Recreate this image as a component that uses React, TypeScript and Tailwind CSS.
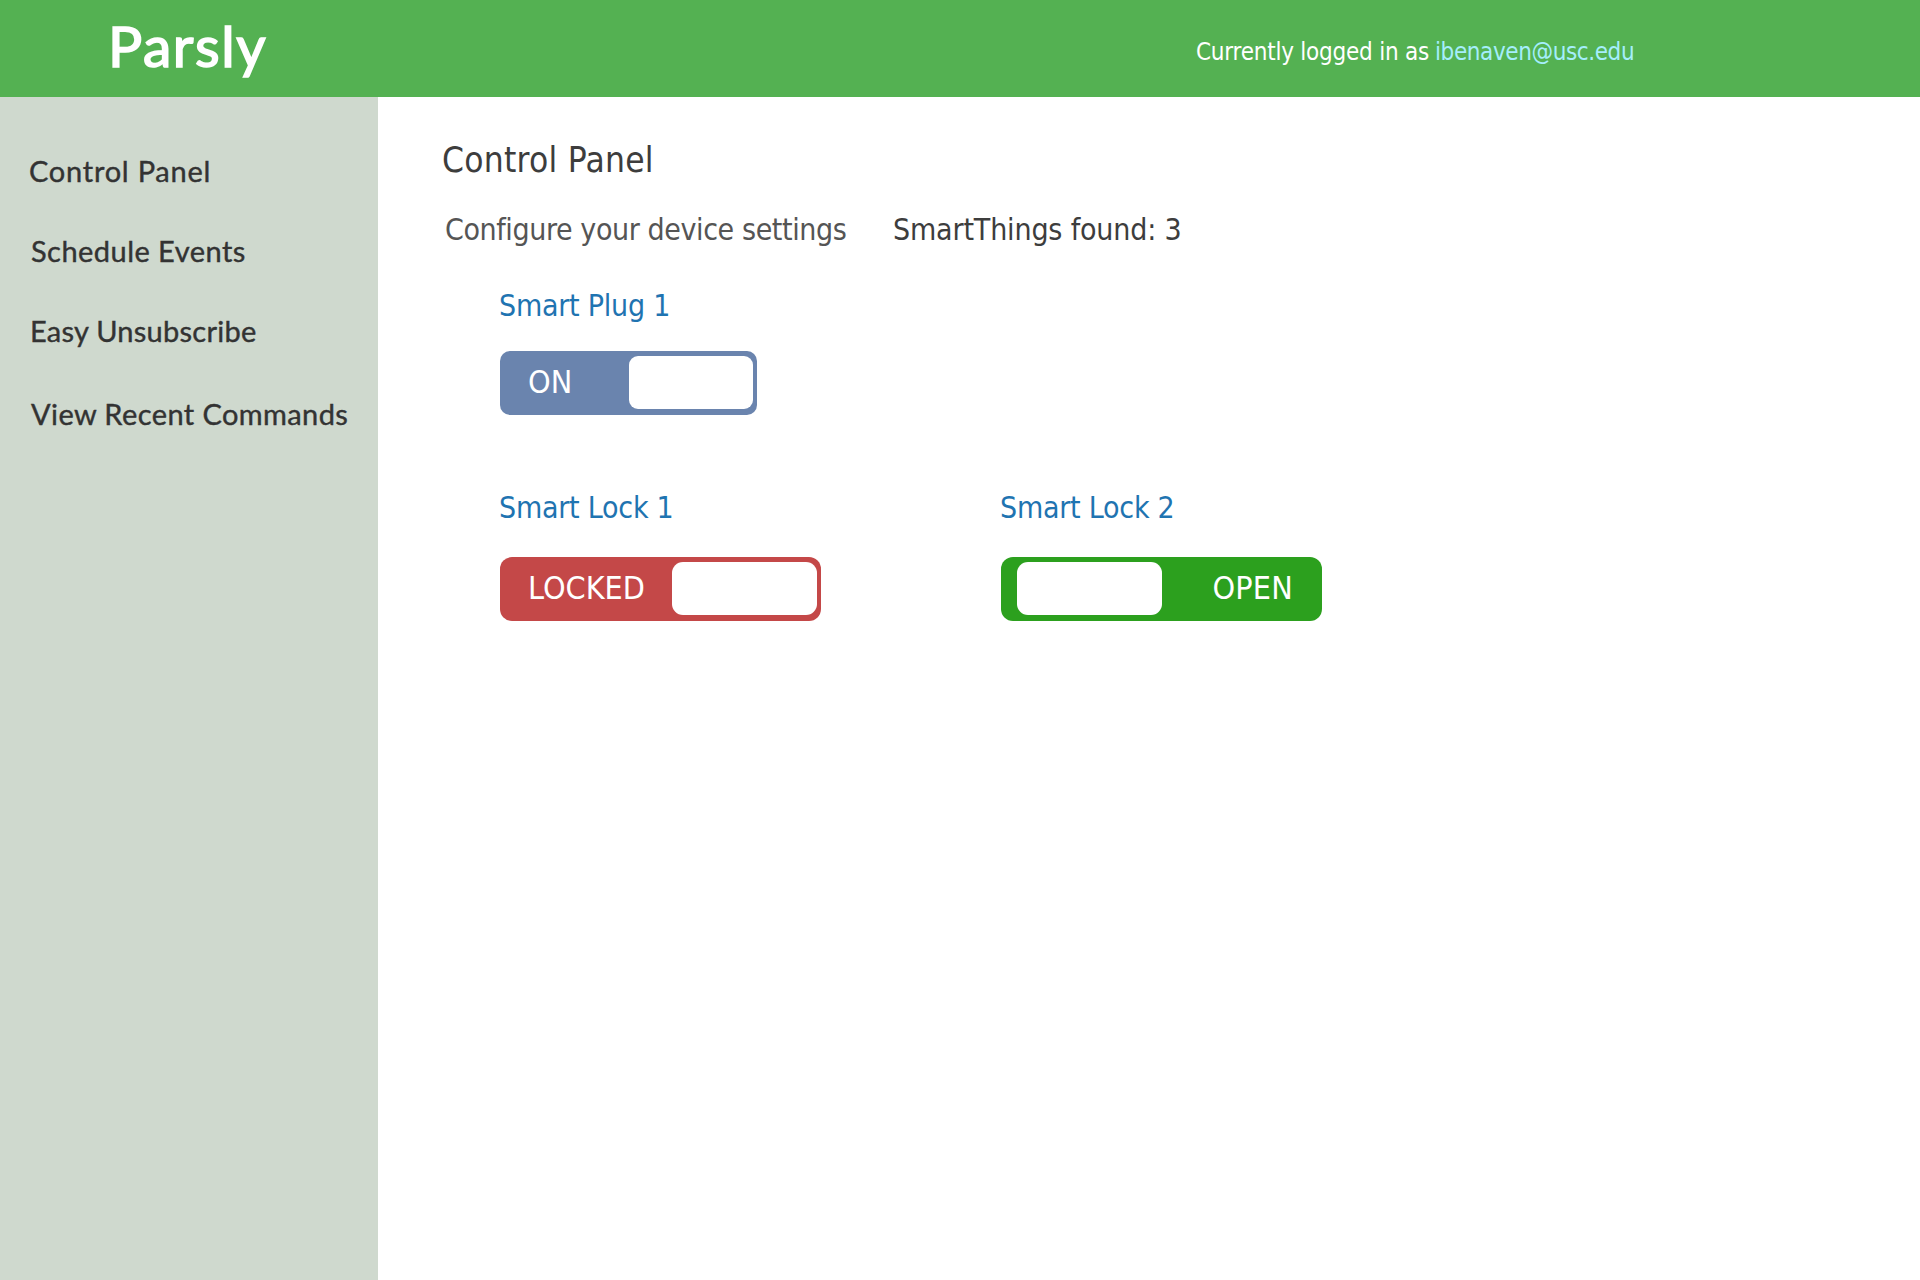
const NAV = [
  { label: 'Control Panel', className: 'ml-[29px] tracking-[0.76px]' },
  { label: 'Schedule Events', className: 'ml-[31px] mt-[45px] tracking-[0.46px]' },
  { label: 'Easy Unsubscribe', className: 'ml-[30px] mt-[45px] tracking-[0.25px]' },
  { label: 'View Recent Commands', className: 'ml-[31px] mt-12 tracking-[0.4px]' },
];

function Header() {
  return (
    <header className="flex h-[97px] items-start bg-[#54b152] text-white">
      <h1 className="mt-[11px] ml-[108px] w-[1088px] font-['Lato',sans-serif] text-[57px] leading-[69px] tracking-[1.6px] [-webkit-text-stroke:1.6px_white]">
        Parsly
      </h1>
      <p className="mt-[38px] flex text-2xl leading-7 whitespace-nowrap">
        <span className="w-[239px] tracking-[-0.23px]">Currently logged in as</span>
        <a className="tracking-[-0.4px] text-[#a5eefb]">ibenaven@usc.edu</a>
      </p>
    </header>
  );
}

function Sidebar() {
  return (
    <nav className="flex w-[378px] shrink-0 flex-col bg-[#cfd9ce] pt-14 font-['Lato',sans-serif] text-[29px] leading-[35px] whitespace-nowrap text-[#333333] [-webkit-text-stroke:0.4px_#333333]">
      {NAV.map((item) => (
        <a key={item.label} className={item.className}>
          {item.label}
        </a>
      ))}
    </nav>
  );
}

function DeviceName({ children }: { children: string }) {
  return (
    <h3 className="-ml-px text-[30px] leading-[35px] tracking-[-0.24px] whitespace-nowrap text-[#1f74b1]">{children}</h3>
  );
}

export default function App() {
  return (
    <div className="flex h-[1280px] w-[1920px] flex-col overflow-hidden bg-white font-['DejaVu_Sans_Condensed','DejaVu_Sans',sans-serif]">
      <Header />
      <div className="flex flex-1">
        <Sidebar />
        <main className="flex-1 pt-[43px] pl-16 text-[#3d3d3d]">
          <h2 className="text-[35px] leading-10 tracking-[0.25px]">Control Panel</h2>
          <div className="mt-8 ml-[3px] flex text-[30px] leading-[35px] whitespace-nowrap">
            <p className="w-[448px] tracking-[-0.4px] text-[#555555]">Configure your device settings</p>
            <p className="tracking-[-0.16px]">SmartThings found: 3</p>
          </div>

          <div className="mt-[41px] ml-[58px] grid grid-cols-[501px_321px] gap-y-[75px] text-[32px]">
            <section className="col-span-2">
              <DeviceName>Smart Plug 1</DeviceName>
              <div className="mt-7 flex h-16 w-[257px] items-center justify-between rounded-[10px] bg-[#6a84ae] pr-1 pl-[28px] leading-9 text-white">
                <span className="mb-0.5">ON</span>
                <span className="mb-0.5 h-[53px] w-[124px] rounded-[9px] bg-white" />
              </div>
            </section>

            <section>
              <DeviceName>Smart Lock 1</DeviceName>
              <div className="mt-8 flex h-16 w-[321px] items-center justify-between rounded-xl bg-[#c44848] pr-1 pl-[28px] leading-9 text-white">
                <span className="mb-0.5">LOCKED</span>
                <span className="mb-0.5 h-[53px] w-[145px] rounded-[11px] bg-white" />
              </div>
            </section>

            <section>
              <DeviceName>Smart Lock 2</DeviceName>
              <div className="mt-8 flex h-16 w-[321px] items-center justify-between rounded-xl bg-[#2ca01e] pr-[29px] pl-4 leading-9 text-white">
                <span className="mb-0.5 h-[53px] w-[145px] rounded-[11px] bg-white" />
                <span className="mb-0.5 tracking-[0.2px]">OPEN</span>
              </div>
            </section>
          </div>
        </main>
      </div>
    </div>
  );
}
